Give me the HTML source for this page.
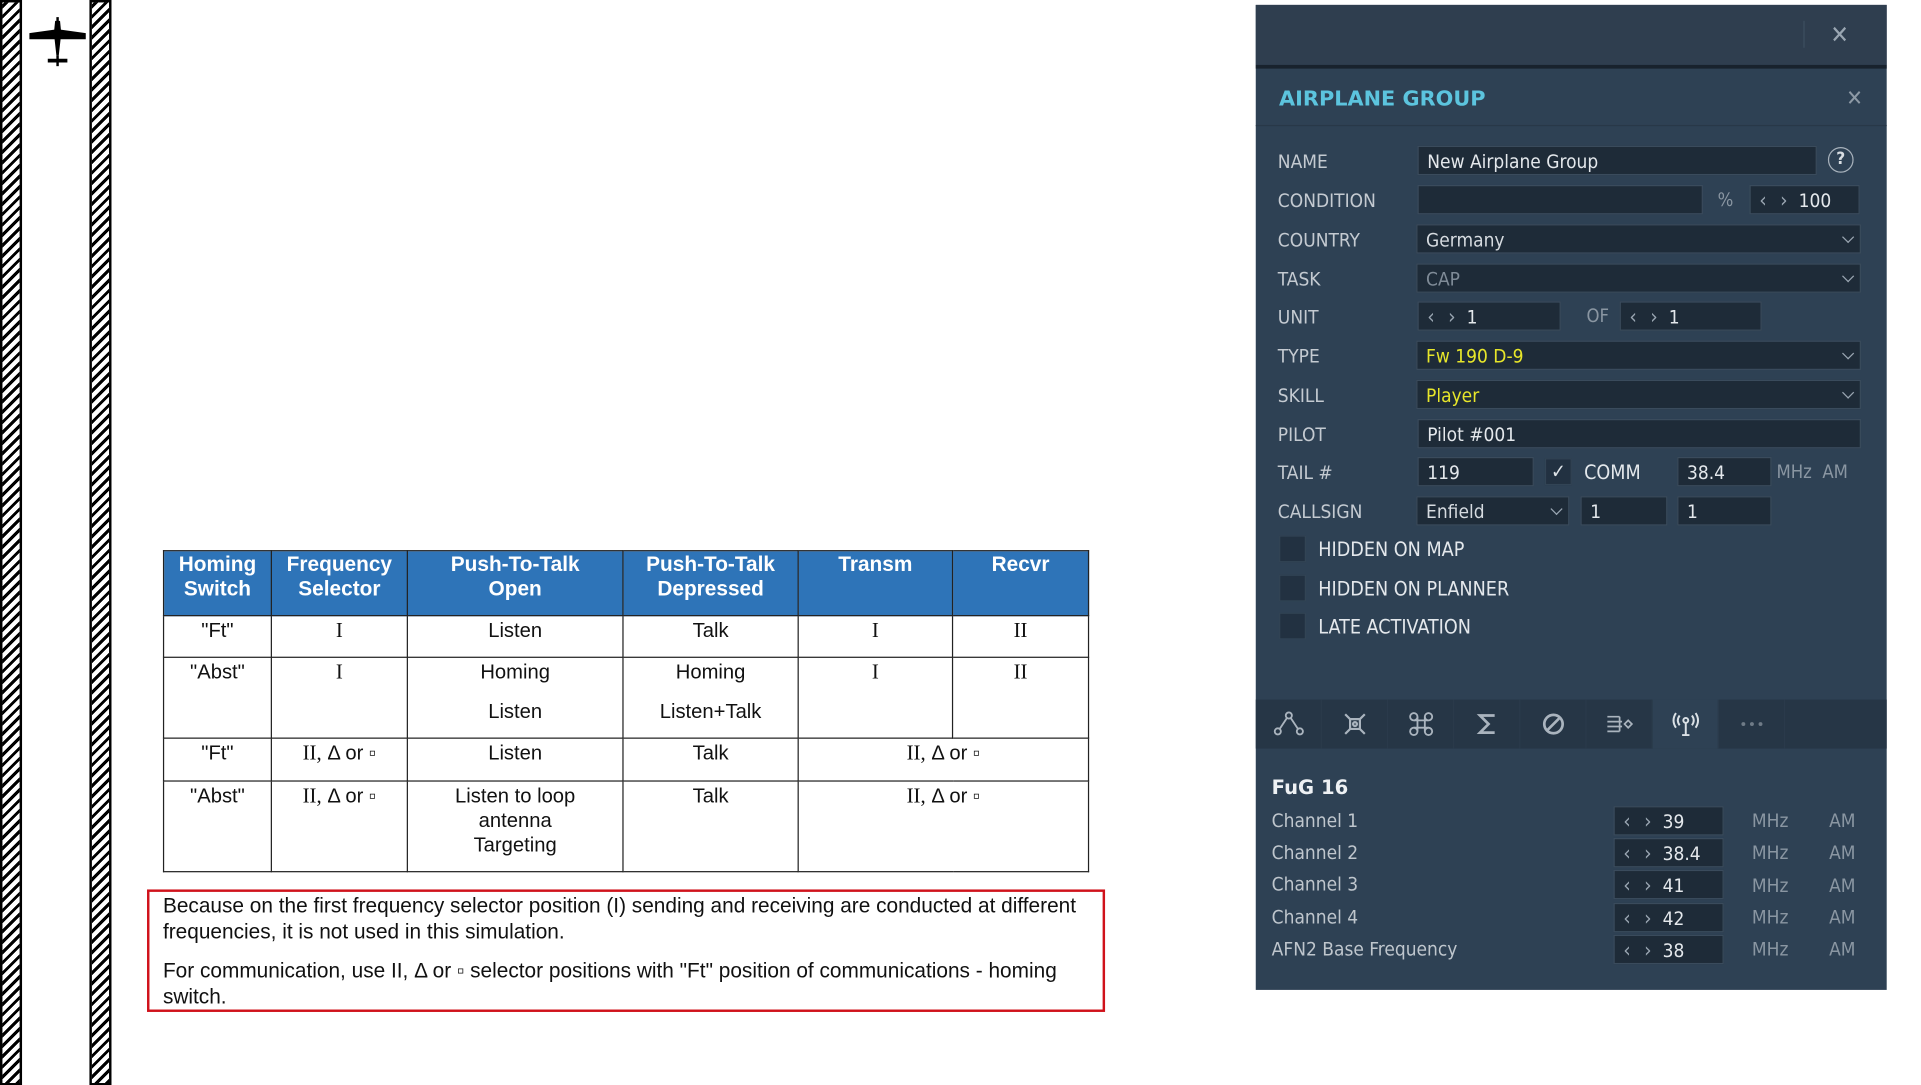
<!DOCTYPE html>
<html><head><meta charset="utf-8"><style>
html,body{margin:0;padding:0;background:#fff;width:1921px;height:1081px;overflow:hidden}
#w{position:absolute;left:0;top:0;width:1568px;height:882px;transform:scale(1.22513);transform-origin:0 0;font-family:"Liberation Sans","DejaVu Sans",sans-serif}
.a{position:absolute}
.stripe{position:absolute;top:0;width:14px;height:882px;border:2px solid #000;background:repeating-linear-gradient(-45deg,#000 0 2.5px,#fff 2.5px 6px)}
table{position:absolute;left:133px;top:449px;border-collapse:collapse;font-size:16.5px;color:#111}
td,th{border:1.3px solid #222;text-align:center;vertical-align:top;padding:2px 0 0 0;line-height:20px}
th{background:#2e74b8;color:#fff;font-weight:bold;height:51px;padding-top:1px;vertical-align:top;font-size:17px}
.s{font-family:"Liberation Serif",serif;font-size:17px}
.p{background:#2e4154}
.lab{position:absolute;left:18px;color:#c4cad1;font-size:15.5px;height:24px;line-height:24px}
.in{position:absolute;height:24px;line-height:24px;background:#1e2b38;border:1px solid #3a4b5c;box-sizing:border-box;color:#e4e8ec;font-size:15.5px;padding-left:7px;font-family:"DejaVu Sans Condensed","Liberation Sans",sans-serif}
.dd::after{content:"";position:absolute;right:6px;top:6px;width:6px;height:6px;border-right:1.3px solid #9aa6b2;border-bottom:1.3px solid #9aa6b2;transform:rotate(45deg)}
.ar{color:#9aa6b2;margin-right:6px;letter-spacing:3px;font-size:17px}
.g{color:#8a96a2}
.cb{position:absolute;left:19px;width:22px;height:22px;background:#223141;border:1px solid #324455;box-sizing:border-box}
.cl{position:absolute;left:51px;color:#e4e8ec;font-size:16px;height:22px;line-height:22px;font-family:"DejaVu Sans Condensed","Liberation Sans",sans-serif}
.ch{position:absolute;left:13px;color:#bfc6cd;font-size:15.5px;height:24px;line-height:24px;font-family:"DejaVu Sans Condensed","Liberation Sans",sans-serif}
.tab{position:absolute;top:0;width:53px;height:40px;border-right:1px solid #2a3a4b}
.tab svg{position:absolute;left:14px;top:8px}
</style></head><body><div id="w">

<div class="stripe" style="left:0"></div>
<div class="stripe" style="left:73px"></div>
<svg class="a" style="left:22px;top:10px" width="50" height="46" viewBox="0 0 50 46">
<path d="M24 4h2v4h-2z M23 7h4l1 10-2 18h-2l-2-18z" fill="#000"/>
<path d="M2 17l22-3h2l22 3v5l-22 0h-2L2 22z" fill="#000"/>
<path d="M17 38h16v3H17z" fill="#000"/><rect x="24" y="35" width="2" height="9" fill="#000"/>
</svg>

<table>
<tr><th style="width:87px">Homing<br>Switch</th><th style="width:110px">Frequency<br>Selector</th><th style="width:175px">Push-To-Talk<br>Open</th><th style="width:142px">Push-To-Talk<br>Depressed</th><th style="width:125px">Transm</th><th style="width:110px">Recvr</th></tr>
<tr style="height:34px"><td>"Ft"</td><td class="s">I</td><td>Listen</td><td>Talk</td><td class="s">I</td><td class="s">II</td></tr>
<tr style="height:66px"><td>"Abst"</td><td class="s">I</td><td>Homing<br><div style="margin-top:12px">Listen</div></td><td>Homing<br><div style="margin-top:12px">Listen+Talk</div></td><td class="s">I</td><td class="s">II</td></tr>
<tr style="height:35px"><td>"Ft"</td><td><span class="s">II,</span> Δ or ▫</td><td>Listen</td><td>Talk</td><td colspan="2"><span class="s">II,</span> Δ or ▫</td></tr>
<tr style="height:74px"><td>"Abst"</td><td><span class="s">II,</span> Δ or ▫</td><td>Listen to loop<br>antenna<br>Targeting</td><td>Talk</td><td colspan="2"><span class="s">II,</span> Δ or ▫</td></tr>
</table>

<div class="a" style="left:120px;top:726px;width:778px;height:96px;border:2px solid #d0121b;font-size:17px;color:#111;line-height:21px">
<div style="position:absolute;left:11px;top:1px;width:750px">Because on the first frequency selector position (I) sending and receiving are conducted at different frequencies, it is not used in this simulation.</div>
<div style="position:absolute;left:11px;top:54px;width:750px">For communication, use II, Δ or ▫ selector positions with "Ft" position of communications - homing switch.</div>
</div>

<!-- panel -->
<div class="a p" style="left:1025px;top:4px;width:515px;height:804px;font-family:'DejaVu Sans Condensed','Liberation Sans',sans-serif">
<div class="a" style="left:0;top:0;width:515px;height:49px;background:#2f3e4f"></div>
<div class="a" style="left:0;top:49px;width:515px;height:3px;background:#18222d"></div>
<div class="a" style="left:447px;top:13px;width:1px;height:22px;background:#3d4e60"></div>
<div class="a" style="left:469px;top:12px;color:#9aa6b2;font-size:20px">✕</div>
<div class="a" style="left:0;top:98px;width:515px;height:1px;background:#283848"></div>
<div class="a" style="left:19px;top:67px;color:#5cc4de;font-weight:bold;font-size:17px;font-family:'DejaVu Sans','Liberation Sans',sans-serif">AIRPLANE GROUP</div>
<div class="a" style="left:482px;top:66px;color:#8d99a5;font-size:18px">✕</div>

<div class="lab" style="top:116px">NAME</div>
<div class="in" style="left:132px;top:115px;width:326px">New Airplane Group</div>
<div class="a" style="left:467px;top:116px;width:19px;height:19px;border:1.5px solid #a7b1bb;border-radius:50%;color:#d8dde2;text-align:center;line-height:19px;font-weight:bold;font-size:14px">?</div>

<div class="lab" style="top:148px">CONDITION</div>
<div class="in" style="left:132px;top:147px;width:233px"></div>
<div class="a g" style="left:377px;top:147px;line-height:24px;font-size:15px">%</div>
<div class="in" style="left:403px;top:147px;width:90px"><span class="ar">‹ ›</span>100</div>

<div class="lab" style="top:180px">COUNTRY</div>
<div class="in dd" style="left:131px;top:179px;width:363px;color:#d6dbe0">Germany</div>
<div class="lab" style="top:212px">TASK</div>
<div class="in dd" style="left:131px;top:211px;width:363px;color:#7f8b97">CAP</div>

<div class="lab" style="top:243px">UNIT</div>
<div class="in" style="left:132px;top:242px;width:117px"><span class="ar">‹ ›</span>1</div>
<div class="a g" style="left:270px;top:242px;line-height:24px;font-size:15px">OF</div>
<div class="in" style="left:297px;top:242px;width:116px"><span class="ar">‹ ›</span>1</div>

<div class="lab" style="top:275px">TYPE</div>
<div class="in dd" style="left:131px;top:274px;width:363px;color:#e7e62a">Fw 190 D-9</div>
<div class="lab" style="top:307px">SKILL</div>
<div class="in dd" style="left:131px;top:306px;width:363px;color:#e7e62a">Player</div>
<div class="lab" style="top:339px">PILOT</div>
<div class="in" style="left:132px;top:338px;width:362px">Pilot #001</div>

<div class="lab" style="top:370px">TAIL #</div>
<div class="in" style="left:132px;top:369px;width:95px">119</div>
<div class="a" style="left:236px;top:370px;width:22px;height:22px;background:#223141;border:1px solid #324455;box-sizing:border-box;color:#dfe4e8;text-align:center;line-height:20px;font-size:16px;font-weight:bold">✓</div>
<div class="a" style="left:268px;top:370px;color:#e4e8ec;line-height:24px;font-size:16px">COMM</div>
<div class="in" style="left:344px;top:369px;width:77px">38.4</div>
<div class="a g" style="left:425px;top:369px;line-height:24px;font-size:15px">MHz&nbsp; AM</div>

<div class="lab" style="top:402px">CALLSIGN</div>
<div class="in dd" style="left:131px;top:401px;width:125px;color:#d6dbe0">Enfield</div>
<div class="in" style="left:265px;top:401px;width:71px">1</div>
<div class="in" style="left:344px;top:401px;width:77px">1</div>

<div class="cb" style="top:433px"></div><div class="cl" style="top:434px">HIDDEN ON MAP</div>
<div class="cb" style="top:465px"></div><div class="cl" style="top:466px">HIDDEN ON PLANNER</div>
<div class="cb" style="top:496px"></div><div class="cl" style="top:497px">LATE ACTIVATION</div>

<div class="a" style="left:0;top:567px;width:515px;height:40px;background:#263646">
<div class="tab" style="left:0"><svg width="26" height="24" viewBox="0 0 26 24" fill="none" stroke="#aab4be" stroke-width="1.5"><circle cx="4" cy="18" r="2.5"/><circle cx="22" cy="18" r="2.5"/><circle cx="13" cy="5" r="2.5"/><path d="M5.5 16L11.5 7M14.5 7L20.5 16"/></svg></div>
<div class="tab" style="left:54px"><svg width="26" height="24" viewBox="0 0 26 24" fill="none" stroke="#aab4be" stroke-width="1.8"><path d="M5 4l4 4h8l4-4M5 20l4-4h8l4 4M9 8v8M17 8v8"/><circle cx="13" cy="12" r="1.6"/></svg></div>
<div class="tab" style="left:108px"><svg width="26" height="24" viewBox="0 0 26 24" fill="none" stroke="#aab4be" stroke-width="1.5"><circle cx="7" cy="6" r="3"/><circle cx="19" cy="6" r="3"/><circle cx="7" cy="18" r="3"/><circle cx="19" cy="18" r="3"/><path d="M10 6v12M16 6v12M7 9h12M7 15h12"/></svg></div>
<div class="tab" style="left:162px"><svg width="26" height="24" viewBox="0 0 26 24" fill="none" stroke="#aab4be" stroke-width="2.2"><path d="M19 5H7l7 7-7 7h12"/></svg></div>
<div class="tab" style="left:216px"><svg width="26" height="24" viewBox="0 0 26 24" fill="none" stroke="#aab4be" stroke-width="2.2"><circle cx="13" cy="12" r="7.5"/><path d="M8 17L18 7"/></svg></div>
<div class="tab" style="left:270px"><svg width="26" height="24" viewBox="0 0 26 24" fill="none" stroke="#aab4be" stroke-width="1.4"><path d="M3 6h10M3 10h12M3 14h12M3 18h10M13 6v12"/><path d="M20 9l3 3-3 3-3-3z"/></svg></div>
<div class="tab" style="left:324px;background:#2e4154"><svg width="26" height="24" viewBox="0 0 26 24" fill="none" stroke="#dbe1e6" stroke-width="1.6"><circle cx="13" cy="9" r="2"/><path d="M13 11v10M10 21h6M8 5q-3 4 0 8M18 5q3 4 0 8M5 3q-4 6 0 12M21 3q4 6 0 12"/></svg></div>
<div class="tab" style="left:378px"><svg width="26" height="24" viewBox="0 0 26 24" fill="#6f7b87"><circle cx="6" cy="12" r="1.6"/><circle cx="13" cy="12" r="1.6"/><circle cx="20" cy="12" r="1.6"/></svg></div>
</div>

<div class="a" style="left:13px;top:629px;color:#eef1f4;font-weight:bold;font-size:16px;font-family:'DejaVu Sans','Liberation Sans',sans-serif">FuG 16</div>

<div class="ch" style="top:654px">Channel 1</div>
<div class="in" style="left:292px;top:654px;width:90px"><span class="ar">‹ ›</span>39</div>
<div class="ch" style="top:680px">Channel 2</div>
<div class="in" style="left:292px;top:680px;width:90px"><span class="ar">‹ ›</span>38.4</div>
<div class="ch" style="top:706px">Channel 3</div>
<div class="in" style="left:292px;top:706px;width:90px"><span class="ar">‹ ›</span>41</div>
<div class="ch" style="top:733px">Channel 4</div>
<div class="in" style="left:292px;top:733px;width:90px"><span class="ar">‹ ›</span>42</div>
<div class="ch" style="top:759px">AFN2 Base Frequency</div>
<div class="in" style="left:292px;top:759px;width:90px"><span class="ar">‹ ›</span>38</div>
<div class="a g" style="left:405px;top:653px;line-height:26.3px;font-size:15.5px">MHz<br>MHz<br>MHz<br>MHz<br>MHz</div>
<div class="a g" style="left:468px;top:653px;line-height:26.3px;font-size:15.5px">AM<br>AM<br>AM<br>AM<br>AM</div>
</div>
</div></body></html>
